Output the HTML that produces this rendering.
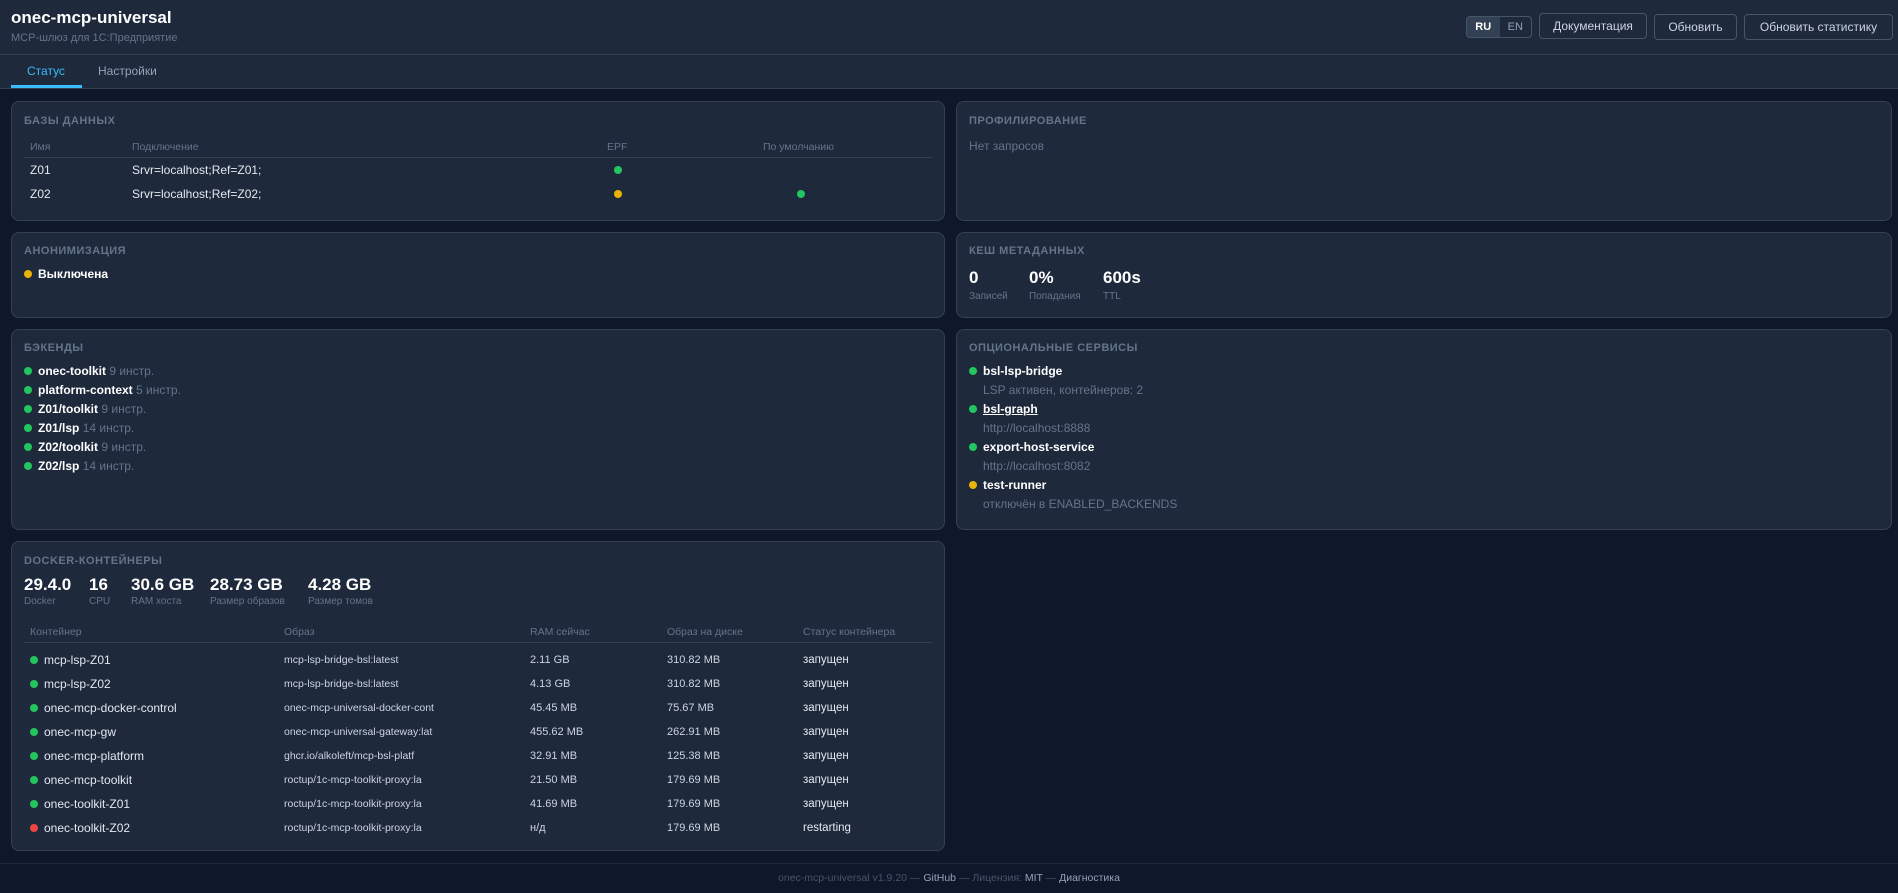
<!DOCTYPE html>
<html><head><meta charset="utf-8"><style>
*{box-sizing:border-box;margin:0;padding:0}
body{width:1898px;height:893px;background:#0f172a;font-family:"Liberation Sans",sans-serif;color:#e2e8f0;position:relative;overflow:hidden;font-size:12px}
.a{position:absolute;white-space:nowrap}
.hdr{position:absolute;left:0;top:0;width:1898px;height:88px;background:#1e293b}
.l1{position:absolute;left:0;top:54px;width:1898px;height:1px;background:#334155}
.l2{position:absolute;left:0;top:88px;width:1898px;height:1px;background:#334155}
.card{position:absolute;background:#1e293b;border:1px solid #334155;border-radius:8px}
.t{font-size:11px;font-weight:bold;color:#64748b;letter-spacing:.5px;text-transform:uppercase}
.btn{position:absolute;height:26px;border:1px solid #475569;border-radius:4px;color:#cbd5e1;font-size:12px;display:flex;align-items:center;justify-content:center}
.dot{display:inline-block;width:8px;height:8px;border-radius:50%;margin-right:6px;vertical-align:0px}
.g{background:#22c55e}.y{background:#eab308}.r{background:#ef4444}
.mut{color:#64748b}
.th{font-size:10.5px;color:#64748b}
.big{font-size:17px;font-weight:bold;color:#fff}
.sm{font-size:10px;color:#64748b}
.b{font-weight:bold;color:#fff}
</style></head><body>
<div class="hdr"></div><div class="l1"></div><div class="l2"></div>
<div class="a" style="left:11px;top:8px;font-size:17px;font-weight:bold;color:#fff">onec-mcp-universal</div>
<div class="a" style="left:11px;top:32px;font-size:11px;color:#64748b">MCP-шлюз для 1С:Предприятие</div>
<div class="btn" style="left:1466px;top:16px;width:66px;height:22px;padding:0;justify-content:flex-start;overflow:hidden">
<span style="background:#334155;color:#fff;width:33px;height:100%;display:flex;align-items:center;justify-content:center;font-size:11px;font-weight:bold">RU</span><span style="width:32px;text-align:center;font-size:11px;color:#94a3b8">EN</span></div>
<div class="btn" style="left:1539px;top:13px;width:108px">Документация</div>
<div class="btn" style="left:1654px;top:14px;width:83px">Обновить</div>
<div class="btn" style="left:1744px;top:14px;width:149px">Обновить статистику</div>
<div class="a" style="left:27px;top:64px;font-size:12px;color:#38bdf8">Статус</div>
<div class="a" style="left:11px;top:85px;width:71px;height:3px;background:#38bdf8"></div>
<div class="a" style="left:98px;top:64px;font-size:12px;color:#94a3b8">Настройки</div>

<div class="card" style="left:11px;top:101px;width:934px;height:120px"></div>
<div class="a t" style="left:24px;top:115px">Базы данных</div>
<div class="a th" style="left:30px;top:141px">Имя</div>
<div class="a th" style="left:132px;top:141px">Подключение</div>
<div class="a th" style="left:607px;top:141px">EPF</div>
<div class="a th" style="left:763px;top:141px">По умолчанию</div>
<div class="a" style="left:24px;top:157px;width:908px;height:1px;background:#334155"></div>
<div class="a" style="left:30px;top:163px">Z01</div>
<div class="a" style="left:132px;top:163px">Srvr=localhost;Ref=Z01;</div>
<div class="a dot g" style="left:614px;top:166px"></div>
<div class="a" style="left:30px;top:187px">Z02</div>
<div class="a" style="left:132px;top:187px">Srvr=localhost;Ref=Z02;</div>
<div class="a dot y" style="left:614px;top:190px"></div>
<div class="a dot g" style="left:797px;top:190px"></div>

<div class="card" style="left:956px;top:101px;width:936px;height:120px"></div>
<div class="a t" style="left:969px;top:115px">Профилирование</div>
<div class="a" style="left:969px;top:139px;color:#64748b">Нет запросов</div>

<div class="card" style="left:11px;top:232px;width:934px;height:86px"></div>
<div class="a t" style="left:24px;top:245px">Анонимизация</div>
<div class="a b" style="left:24px;top:267px"><span class="dot y"></span>Выключена</div>

<div class="card" style="left:956px;top:232px;width:936px;height:86px"></div>
<div class="a t" style="left:969px;top:245px">Кеш метаданных</div>
<div class="a big" style="left:969px;top:268px">0</div>
<div class="a sm" style="left:969px;top:291px">Записей</div>
<div class="a big" style="left:1029px;top:268px">0%</div>
<div class="a sm" style="left:1029px;top:291px">Попадания</div>
<div class="a big" style="left:1103px;top:268px">600s</div>
<div class="a sm" style="left:1103px;top:291px">TTL</div>

<div class="card" style="left:11px;top:329px;width:934px;height:201px"></div>
<div class="a t" style="left:24px;top:342px">Бэкенды</div>
<div class="a" style="left:24px;top:364px"><span class="dot g"></span><span class="b">onec-toolkit</span> <span class="mut">9 инстр.</span></div>
<div class="a" style="left:24px;top:383px"><span class="dot g"></span><span class="b">platform-context</span> <span class="mut">5 инстр.</span></div>
<div class="a" style="left:24px;top:402px"><span class="dot g"></span><span class="b">Z01/toolkit</span> <span class="mut">9 инстр.</span></div>
<div class="a" style="left:24px;top:421px"><span class="dot g"></span><span class="b">Z01/lsp</span> <span class="mut">14 инстр.</span></div>
<div class="a" style="left:24px;top:440px"><span class="dot g"></span><span class="b">Z02/toolkit</span> <span class="mut">9 инстр.</span></div>
<div class="a" style="left:24px;top:459px"><span class="dot g"></span><span class="b">Z02/lsp</span> <span class="mut">14 инстр.</span></div>

<div class="card" style="left:956px;top:329px;width:936px;height:201px"></div>
<div class="a t" style="left:969px;top:342px">Опциональные сервисы</div>
<div class="a" style="left:969px;top:364px"><span class="dot g"></span><span class="b">bsl-lsp-bridge</span></div>
<div class="a mut" style="left:983px;top:383px">LSP активен, контейнеров: 2</div>
<div class="a" style="left:969px;top:402px"><span class="dot g"></span><span class="b" style="text-decoration:underline">bsl-graph</span></div>
<div class="a mut" style="left:983px;top:421px">http://localhost:8888</div>
<div class="a" style="left:969px;top:440px"><span class="dot g"></span><span class="b">export-host-service</span></div>
<div class="a mut" style="left:983px;top:459px">http://localhost:8082</div>
<div class="a" style="left:969px;top:478px"><span class="dot y"></span><span class="b">test-runner</span></div>
<div class="a mut" style="left:983px;top:497px">отключён в ENABLED_BACKENDS</div>

<div class="card" style="left:11px;top:541px;width:934px;height:310px"></div>
<div class="a t" style="left:24px;top:555px">Docker-контейнеры</div>
<div class="a big" style="left:24px;top:575px">29.4.0</div><div class="a sm" style="left:24px;top:596px">Docker</div>
<div class="a big" style="left:89px;top:575px">16</div><div class="a sm" style="left:89px;top:596px">CPU</div>
<div class="a big" style="left:131px;top:575px">30.6 GB</div><div class="a sm" style="left:131px;top:596px">RAM хоста</div>
<div class="a big" style="left:210px;top:575px">28.73 GB</div><div class="a sm" style="left:210px;top:596px">Размер образов</div>
<div class="a big" style="left:308px;top:575px">4.28 GB</div><div class="a sm" style="left:308px;top:596px">Размер томов</div>
<div class="a th" style="left:30px;top:626px">Контейнер</div>
<div class="a th" style="left:284px;top:626px">Образ</div>
<div class="a th" style="left:530px;top:626px">RAM сейчас</div>
<div class="a th" style="left:667px;top:626px">Образ на диске</div>
<div class="a th" style="left:803px;top:626px">Статус контейнера</div>
<div class="a" style="left:24px;top:642px;width:908px;height:1px;background:#334155"></div>
<div class="a" style="left:30px;top:648px;font-size:12px;line-height:24px;color:#e2e8f0">
<div><span class="dot g"></span>mcp-lsp-Z01</div><div><span class="dot g"></span>mcp-lsp-Z02</div><div><span class="dot g"></span>onec-mcp-docker-control</div><div><span class="dot g"></span>onec-mcp-gw</div><div><span class="dot g"></span>onec-mcp-platform</div><div><span class="dot g"></span>onec-mcp-toolkit</div><div><span class="dot g"></span>onec-toolkit-Z01</div><div><span class="dot r"></span>onec-toolkit-Z02</div></div>
<div class="a" style="left:284px;top:648px;font-size:10.5px;line-height:24px;color:#cbd5e1">
<div>mcp-lsp-bridge-bsl:latest</div><div>mcp-lsp-bridge-bsl:latest</div><div>onec-mcp-universal-docker-cont</div><div>onec-mcp-universal-gateway:lat</div><div>ghcr.io/alkoleft/mcp-bsl-platf</div><div>roctup/1c-mcp-toolkit-proxy:la</div><div>roctup/1c-mcp-toolkit-proxy:la</div><div>roctup/1c-mcp-toolkit-proxy:la</div></div>
<div class="a" style="left:530px;top:648px;font-size:11px;line-height:24px;color:#cbd5e1">
<div>2.11 GB</div><div>4.13 GB</div><div>45.45 MB</div><div>455.62 MB</div><div>32.91 MB</div><div>21.50 MB</div><div>41.69 MB</div><div>н/д</div></div>
<div class="a" style="left:667px;top:648px;font-size:11px;line-height:24px;color:#cbd5e1">
<div>310.82 MB</div><div>310.82 MB</div><div>75.67 MB</div><div>262.91 MB</div><div>125.38 MB</div><div>179.69 MB</div><div>179.69 MB</div><div>179.69 MB</div></div>
<div class="a" style="left:803px;top:648px;font-size:11.5px;line-height:24px;color:#e2e8f0">
<div>запущен</div><div>запущен</div><div>запущен</div><div>запущен</div><div>запущен</div><div>запущен</div><div>запущен</div><div>restarting</div></div>

<div class="a" style="left:0;top:863px;width:1898px;height:1px;background:#1e293b"></div>
<div class="a" style="left:0;top:872px;width:1898px;text-align:center;font-size:10.5px;color:#475569">onec-mcp-universal v1.9.20 — <span style="color:#94a3b8">GitHub</span> — Лицензия: <span style="color:#94a3b8">MIT</span> — <span style="color:#94a3b8">Диагностика</span></div>
</body></html>
